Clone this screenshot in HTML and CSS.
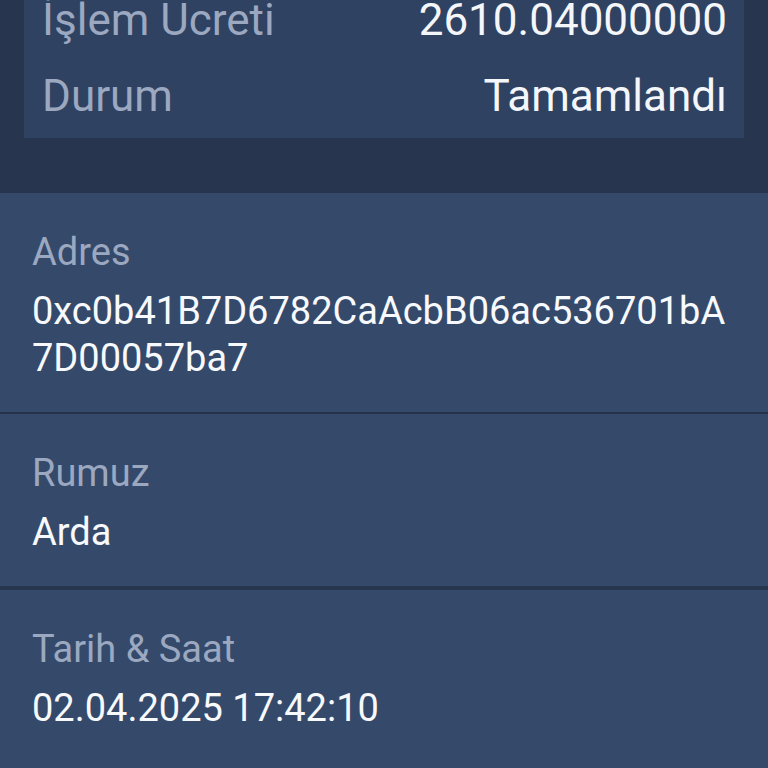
FILE: index.html
```html
<!DOCTYPE html>
<html lang="tr">
<head>
<meta charset="utf-8">
<title>İşlem Detayı</title>
<link rel="stylesheet" href="styles.css">
</head>
<body>
<div class="summary">
  <div class="card">
    <div class="row"><span class="key">İşlem Ücreti</span><span class="val">2610.04000000</span></div>
    <div class="row"><span class="key">Durum</span><span class="val">Tamamlandı</span></div>
  </div>
</div>
<div class="details">
  <div class="item sep-thin">
    <div class="label">Adres</div>
    <div class="value addr">0xc0b41B7D6782CaAcbB06ac536701bA7D00057ba7</div>
  </div>
  <div class="item sep-thick">
    <div class="label">Rumuz</div>
    <div class="value">Arda</div>
  </div>
  <div class="item">
    <div class="label">Tarih &amp; Saat</div>
    <div class="value">02.04.2025 17:42:10</div>
  </div>
</div>
</body>
</html>
```
FILE: styles.css
```css
html, body {
  margin: 0;
  padding: 0;
}
body {
  width: 768px;
  height: 768px;
  overflow: hidden;
  background: #354a6b;
  font-family: Roboto, "Noto Sans", sans-serif;
  -webkit-font-smoothing: antialiased;
}
.summary {
  background: #27354e;
  padding: 0 24px 55px 24px;
}
.card {
  background: #2f4262;
  margin-top: -20px;
  padding: 14px 17px 16px 18px;
  display: flex;
  flex-direction: column;
  gap: 23.5px;
}
.row {
  display: flex;
  justify-content: space-between;
  font-size: 44px;
  line-height: 52px;
}
.key {
  color: #9ba8c0;
}
.val {
  color: #f4f6fa;
}
.details {
  display: flex;
  flex-direction: column;
}
.item {
  padding: 36px 32px 30px 32px;
  font-size: 38px;
  line-height: 47px;
}
.sep-thin {
  border-bottom: 2px solid #25324a;
}
.sep-thick {
  border-bottom: 4px solid #28354f;
}
.label {
  color: #9ba8c0;
}
.value {
  color: #f7f9fc;
  margin-top: 12px;
}
.addr {
  word-break: break-all;
}
```
